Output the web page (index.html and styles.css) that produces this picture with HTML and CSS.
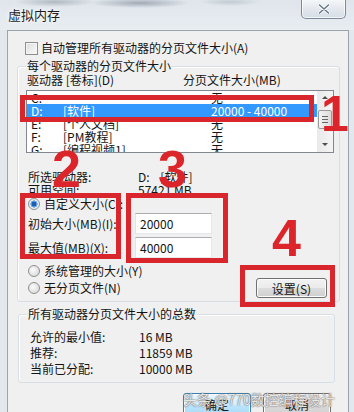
FILE: index.html
```html
<!DOCTYPE html>
<html lang="zh-CN">
<head>
<meta charset="utf-8">
<title>虚拟内存</title>
<link rel="stylesheet" href="styles.css">
</head>
<body>
<div class="win">
  <div class="titlebar">
    <span class="title">虚拟内存</span>
    <div class="close">
      <svg width="12" height="10" viewBox="0 0 12 10"><path d="M1.5 1 L10.5 9 M10.5 1 L1.5 9" stroke="#fff" stroke-width="3.2" stroke-linecap="round"/><path d="M1.5 1 L10.5 9 M10.5 1 L1.5 9" stroke="#6a7888" stroke-width="1.6" stroke-linecap="round"/></svg>
    </div>
  </div>
  <div class="client">
    <div class="chk-row"><span class="checkbox"></span><span>自动管理所有驱动器的分页文件大小(A)</span></div>

    <div class="group g1">
      <div class="legend">每个驱动器的分页文件大小</div>
      <div class="col-head"><span class="h1">驱动器 [卷标](D)</span><span>分页文件大小(MB)</span></div>
      <div class="listbox">
        <div class="rows">
          <div class="row"><span class="drv">C:</span><span class="lbl"></span><span>无</span></div>
          <div class="row sel"><span class="drv">D:</span><span class="lbl">[软件]</span><span>20000 - 40000</span></div>
          <div class="row"><span class="drv">E:</span><span class="lbl">[个人文档]</span><span>无</span></div>
          <div class="row"><span class="drv">F:</span><span class="lbl">[PM教程]</span><span>无</span></div>
          <div class="row"><span class="drv">G:</span><span class="lbl">[编程视频1]</span><span>无</span></div>
        </div>
        <div class="scrollbar">
          <svg class="arr" width="16" height="12" viewBox="0 0 16 12"><path d="M5 8 L8 5 L11 8 Z" fill="#4d4d4d"/></svg>
          <div class="thumb"><i></i><i></i><i></i></div>
          <svg class="arr" width="16" height="12" viewBox="0 0 16 12"><path d="M5 4 L8 7 L11 4 Z" fill="#4d4d4d"/></svg>
        </div>
      </div>

      <div class="info"><span class="k">所选驱动器:</span><span class="v">D:&nbsp;&nbsp;&nbsp;&nbsp;[软件]</span></div>
      <div class="info"><span class="k">可用空间:</span><span class="v">57421 MB</span></div>

      <div class="custom">
        <div class="radio-row"><span class="radio on"></span><span>自定义大小(C):</span></div>
        <div class="field"><span class="k">初始大小(MB)(I):</span><span class="input">20000</span></div>
        <div class="field"><span class="k">最大值(MB)(X):</span><span class="input">40000</span></div>
      </div>

      <div class="bottom-row">
        <div class="radios">
          <div class="radio-row"><span class="radio"></span><span>系统管理的大小(Y)</span></div>
          <div class="radio-row"><span class="radio"></span><span>无分页文件(N)</span></div>
        </div>
        <div class="btn set">设置(S)</div>
      </div>
    </div>

    <div class="group g2">
      <div class="legend">所有驱动器分页文件大小的总数</div>
      <div class="tot first"><span class="k">允许的最小值:</span><span>16 MB</span></div>
      <div class="tot"><span class="k">推荐:</span><span>11859 MB</span></div>
      <div class="tot"><span class="k">当前已分配:</span><span>10000 MB</span></div>
    </div>

    <div class="buttons">
      <div class="btn ok">确定</div>
      <div class="btn">取消</div>
    </div>
  </div>

  <div class="mark box1"></div>
  <div class="num n1">1</div>
  <div class="mark box2"></div>
  <div class="num n2">2</div>
  <div class="mark box3"></div>
  <div class="num n3">3</div>
  <div class="mark box4"></div>
  <div class="num n4">4</div>
  <div class="watermark">头条 @770数控编程设计</div>
</div>
</body>
</html>
```

FILE: styles.css
```css
* { box-sizing: border-box; }
html, body { margin: 0; padding: 0; }
body {
  width: 354px;
  height: 412px;
  overflow: hidden;
  font-family: "Noto Sans CJK SC", "Noto Sans", sans-serif;
  font-size: 12px;
  color: #141414;
}
.win {
  position: relative;
  width: 354px;
  height: 412px;
  background: #e2e8ee;
}
.titlebar {
  height: 30px;
  display: flex;
  justify-content: space-between;
  align-items: flex-start;
  background:
    radial-gradient(ellipse 40px 5px at 55px 2px, rgba(120,130,140,0.45), transparent),
    radial-gradient(ellipse 50px 5px at 140px 3px, rgba(110,120,135,0.55), transparent),
    radial-gradient(ellipse 30px 4px at 230px 2px, rgba(140,150,160,0.35), transparent),
    linear-gradient(#dfe5eb, #e8edf2);
}
.title {
  margin: 6px 0 0 8px;
  font-size: 13px;
  line-height: 18px;
  color: #1e1e1e;
  text-shadow: 0 0 6px #fff, 0 0 3px #fff;
}
.close {
  width: 45px;
  height: 20px;
  margin: -1px 8px 0 0;
  border: 1px solid #7d8a99;
  border-top: none;
  border-radius: 0 0 5px 5px;
  background: linear-gradient(#f6f8fa, #e2e7ed 55%, #d6dde5);
  box-shadow: inset 0 0 0 1px rgba(255,255,255,0.7);
  display: flex;
  align-items: center;
  justify-content: center;
}
.client {
  margin-left: 7px;
  width: 342px;
  height: 382px;
  border: 1px solid #9aa4ae;
  border-bottom: none;
  background: #f0f0f0;
  overflow: hidden;
}
.chk-row {
  margin-top: 10px;
  padding-left: 17px;
  height: 14px;
  display: flex;
  align-items: center;
  gap: 3px;
  line-height: 14px;
}
.checkbox {
  width: 13px;
  height: 13px;
  border: 1px solid #8f8f8f;
  background: linear-gradient(135deg, #dcdcdc, #fbfbfb);
  box-shadow: inset 0 0 0 1px #f4f4f4;
}
.group {
  border: 1px solid #d5dfe5;
  border-radius: 3px;
  box-shadow: inset 1px 1px 0 #fff;
}
.legend {
  display: block;
  width: max-content;
  margin: -9px 0 0 8px;
  height: 15px;
  line-height: 15px;
  padding: 0 1px;
  background: #f0f0f0;
}
.g1 {
  margin: 11px 0 0 9px;
  width: 323px;
  height: 236px;
}
.col-head {
  height: 14px;
  line-height: 14px;
  display: flex;
  padding-left: 9px;
}
.col-head .h1 { width: 156px; }
.listbox {
  margin: 3px 0 0 8px;
  width: 308px;
  height: 63px;
  border: 1px solid #828790;
  background: #fff;
  display: flex;
  overflow: hidden;
}
.rows { flex: 1; }
.row {
  height: 13px;
  line-height: 13px;
  display: flex;
  padding-left: 4px;
  white-space: nowrap;
}
.row.sel { background: #3399ff; color: #fff; }
.drv { width: 32px; }
.lbl { width: 148px; }
.scrollbar {
  width: 16px;
  background: linear-gradient(90deg, #e9e9e9, #f5f5f5);
  display: flex;
  flex-direction: column;
  align-items: center;
}
.arr { display: block; }
.thumb {
  margin-top: 7px;
  width: 14px;
  height: 19px;
  border: 1px solid #9a9a9a;
  border-radius: 2px;
  background: linear-gradient(90deg, #f3f3f3, #dcdcdc);
  display: flex;
  flex-direction: column;
  justify-content: center;
  align-items: center;
  gap: 2px;
}
.thumb i { display: block; width: 6px; height: 1px; background: #666; }
.scrollbar .arr:last-child { margin-top: auto; margin-bottom: 1px; }
.info {
  height: 13px;
  line-height: 13px;
  display: flex;
  padding-left: 10px;
}
.listbox + .info { margin-top: 17px; }
.info .k { width: 110px; }
.custom { margin-top: 1px; }
.radio-row {
  height: 14px;
  line-height: 14px;
  display: flex;
  align-items: center;
  gap: 4px;
  padding-left: 10px;
}
.radio {
  width: 12px;
  height: 12px;
  border-radius: 50%;
  border: 1px solid #8e8f8f;
  background: radial-gradient(circle at 40% 40%, #fbfbfb, #d2d2d2);
}
.radio.on {
  background: radial-gradient(circle, #1c5fb1 0 2.2px, #5ea3e8 2.6px 3.4px, #e9eef3 3.8px);
}
.field {
  height: 24px;
  display: flex;
  align-items: center;
  padding-left: 10px;
}
.field .k { width: 107px; }
.input {
  width: 77px;
  height: 21px;
  border: 1px solid #abadb3;
  border-color: #abadb3 #e3e9ef #e3e9ef #e2e3ea;
  background: #fff;
  line-height: 19px;
  padding-left: 4px;
}
.bottom-row {
  margin-top: 5px;
  display: flex;
  align-items: flex-end;
  justify-content: space-between;
  padding-right: 12px;
}
.radios { display: flex; flex-direction: column; gap: 3px; margin-bottom: 3px; }
.btn {
  height: 21px;
  border: 1px solid #707070;
  border-radius: 3px;
  background: linear-gradient(#f2f2f2, #ebebeb 50%, #dddddd 50%, #cfcfcf);
  box-shadow: inset 0 0 0 1px #fcfcfc;
  display: flex;
  align-items: center;
  justify-content: center;
}
.set { width: 71px; height: 20px; }
.g2 {
  margin: 12px 0 0 10px;
  width: 317px;
  height: 69px;
}
.tot {
  height: 16px;
  line-height: 16px;
  display: flex;
  padding-left: 11px;
}
.tot.first { margin-top: 8px; }
.tot .k { width: 109px; }
.buttons {
  margin-top: 10px;
  display: flex;
  justify-content: flex-end;
  gap: 12px;
  padding-right: 17px;
}
.buttons .btn { width: 68px; height: 23px; }
.btn.ok {
  border-color: #3c7fb1;
  background: linear-gradient(#eaf6fd, #d9f0fc 50%, #bee6fd 50%, #a7d9f5);
}

.mark {
  position: absolute;
  border: 5px solid #d8262c;
}
.box1 { left: 20px; top: 95px; width: 294px; height: 27px; }
.box2 { left: 20px; top: 193px; width: 101px; height: 66px; }
.box3 { left: 126px; top: 193px; width: 102px; height: 70px; }
.box4 { left: 240px; top: 265px; width: 95px; height: 42px; }
.num {
  position: absolute;
  font-family: "Liberation Sans", Arial, sans-serif;
  font-weight: bold;
  font-size: 52px;
  line-height: 52px;
  color: #dc252b;
}
.n1 { left: 321px; top: 88px; font-size: 50px; }
.n2 { left: 52px; top: 143px; }
.n3 { left: 158px; top: 143px; }
.n4 { left: 272px; top: 212px; }
.watermark {
  position: absolute;
  left: 183px;
  top: 389px;
  font-size: 14px;
  line-height: 20px;
  color: rgba(255,255,255,0.85);
  text-shadow: 0 0 1px #555, 0 0 2px #777;
  white-space: nowrap;
}
```
